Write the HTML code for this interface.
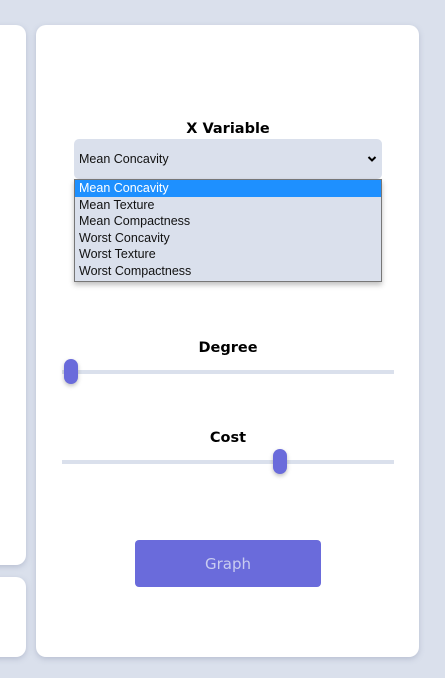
<!DOCTYPE html>
<html><head><style>
html,body{margin:0;padding:0;width:445px;height:678px;overflow:hidden;background:#dae0ec;font-family:"Segoe UI","DejaVu Sans","Liberation Sans",sans-serif;}
.c{position:absolute;background:#fff;border-radius:10px;box-shadow:0 2px 6px rgba(120,130,160,.35);}
.lbl{position:absolute;left:36px;width:384px;text-align:center;font-weight:bold;font-size:14.5px;color:#000;}
.track{position:absolute;left:62px;width:332px;height:4px;background:#dae0ec;}
.thumb{position:absolute;width:14px;height:25px;border-radius:7px;background:#6a6bdb;box-shadow:0 2px 4px rgba(0,0,0,.25);}
.opt{height:16.6px;line-height:16.6px;padding-left:4px;font-family:"Liberation Sans",Arial,sans-serif;font-size:12.5px;color:#111;}
</style></head><body>
<div class="c" style="left:-12px;top:25px;width:38px;height:540px;"></div>
<div class="c" style="left:-12px;top:577px;width:38px;height:80px;"></div>
<div class="c" style="left:36px;top:25px;width:383px;height:632px;"></div>
<div class="lbl" style="top:121px;">X Variable</div>
<div style="position:absolute;left:74px;top:139px;width:308px;height:40px;background:#dae0ec;border-radius:5px;"></div>
<div style="position:absolute;left:79px;top:152px;font-family:'Liberation Sans',Arial,sans-serif;font-size:12.5px;color:#111;">Mean Concavity</div>
<svg style="position:absolute;left:367px;top:155px" width="10" height="8" viewBox="0 0 10 8"><path d="M1.5 2 L5 5.5 L8.5 2" stroke="#000" stroke-width="2" fill="none"/></svg>
<div style="position:absolute;left:74px;top:179px;width:306px;height:101px;background:#dae0ec;border:1px solid #777;box-shadow:0 3px 5px rgba(0,0,0,.25);">
<div class="opt" style="background:#1e90ff;color:#fff;">Mean Concavity</div>
<div class="opt">Mean Texture</div>
<div class="opt">Mean Compactness</div>
<div class="opt">Worst Concavity</div>
<div class="opt">Worst Texture</div>
<div class="opt">Worst Compactness</div>
</div>
<div class="lbl" style="top:340px;">Degree</div>
<div class="track" style="top:370px;"></div>
<div class="thumb" style="left:64px;top:359px;"></div>
<div class="lbl" style="top:430px;">Cost</div>
<div class="track" style="top:460px;"></div>
<div class="thumb" style="left:273px;top:449px;"></div>
<div style="position:absolute;left:135px;top:540px;width:186px;height:47px;background:#6a6bdb;border-radius:4px;color:#c9ccf0;font-size:15px;text-align:center;line-height:49px;">Graph</div>
</body></html>
